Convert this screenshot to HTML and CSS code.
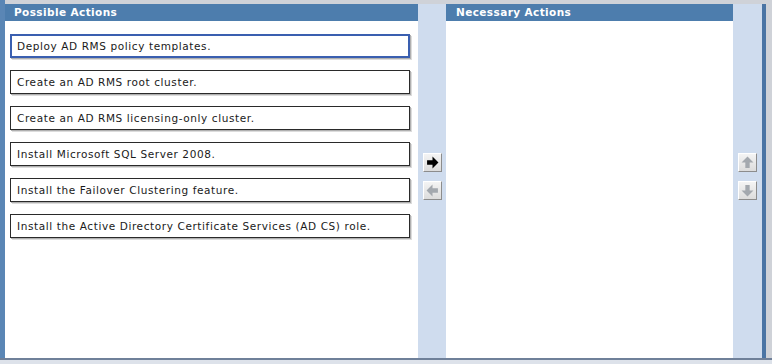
FILE: index.html
```html
<!DOCTYPE html>
<html>
<head>
<meta charset="utf-8">
<link rel="stylesheet" href="styles.css">
</head>
<body>
<div class="frame">
  <div class="board">
    <section class="panel left">
      <div class="head">Possible Actions</div>
      <div class="list">
        <div class="item selected">Deploy AD RMS policy templates.</div>
        <div class="item">Create an AD RMS root cluster.</div>
        <div class="item">Create an AD RMS licensing-only cluster.</div>
        <div class="item">Install Microsoft SQL Server 2008.</div>
        <div class="item">Install the Failover Clustering feature.</div>
        <div class="item">Install the Active Directory Certificate Services (AD CS) role.</div>
      </div>
    </section>
    <div class="rail">
      <div class="btn"><svg viewBox="0 0 12 12" width="13" height="13"><path d="M1 4h5V0.5l5.5 5.5L6 11.5V8H1z" fill="#000"/></svg></div>
      <div class="btn"><svg viewBox="0 0 12 12" width="13" height="13"><path d="M11 4H6V0.5L0.5 6 6 11.5V8h5z" fill="#a3a8ae"/></svg></div>
    </div>
    <section class="panel right">
      <div class="head">Necessary Actions</div>
      <div class="list"></div>
    </section>
    <div class="rail">
      <div class="btn"><svg viewBox="0 0 12 12" width="13" height="13"><path d="M4 11V6H0.5L6 0.5 11.5 6H8v5z" fill="#a3a8ae"/></svg></div>
      <div class="btn"><svg viewBox="0 0 12 12" width="13" height="13"><path d="M4 1v5H0.5L6 11.5 11.5 6H8V1z" fill="#a3a8ae"/></svg></div>
    </div>
    <div class="edge"></div>
  </div>
  <div class="foot"></div>
</div>
</body>
</html>
```
FILE: styles.css
```css
html, body {
  margin: 0;
  padding: 0;
  background: #e4e7ee;
}
.frame {
  width: 772px;
  height: 364px;
  display: flex;
  flex-direction: column;
  background: #e4e7ee;
}
.board {
  display: flex;
  height: 358px;
  padding-top: 4px;
  box-sizing: border-box;
  background: #cfd2d8;
  border-left: 5px solid #5a86b5;
  width: 772px;
}
.panel {
  display: flex;
  flex-direction: column;
  background: #ffffff;
}
.panel.left { width: 413px; }
.panel.right { width: 287px; }
.head {
  height: 17px;
  background: #4d7dad;
  color: #ffffff;
  font-family: "DejaVu Sans", Verdana, sans-serif;
  font-weight: bold;
  font-size: 10.5px;
  letter-spacing: 0.4px;
  line-height: 17px;
  padding-left: 9px;
}
.panel.right .head { padding-left: 10px; }
.list {
  flex: 1;
  display: flex;
  flex-direction: column;
  gap: 12px;
  padding: 13px 0 0 5px;
}
.item {
  width: 400px;
  height: 24px;
  box-sizing: border-box;
  border: 1px solid #2a2a2a;
  box-shadow: 1px 1px 0 #b0b0b0, 2px 2px 0 #dcdcdc;
  background: #fff;
  font-family: "DejaVu Sans", Verdana, sans-serif;
  font-size: 10.5px;
  letter-spacing: 0.6px;
  line-height: 22px;
  color: #1a1a1a;
  padding-left: 6px;
  white-space: nowrap;
}
.item.selected {
  border: 2px solid #3a5fb0;
  line-height: 20px;
  padding-left: 5px;
}
.rail {
  width: 28px;
  background: #cfdcee;
  display: flex;
  flex-direction: column;
  align-items: center;
  padding-top: 149px;
  gap: 9px;
  box-sizing: border-box;
}
.rail:nth-of-type(2) { width: 29px; }
.btn {
  width: 19px;
  height: 19px;
  box-sizing: border-box;
  background: linear-gradient(#f4f4f4, #dcdcdc);
  border: 1px solid;
  border-color: #ffffff #8c8c8c #8c8c8c #ffffff;
  display: flex;
  align-items: center;
  justify-content: center;
}
.edge {
  width: 4px;
  background: #4a74a4;
}
.foot {
  height: 6px;
  border-top: 2px solid #6f8099;
  box-sizing: border-box;
  background: #dde2ea;
}
```
